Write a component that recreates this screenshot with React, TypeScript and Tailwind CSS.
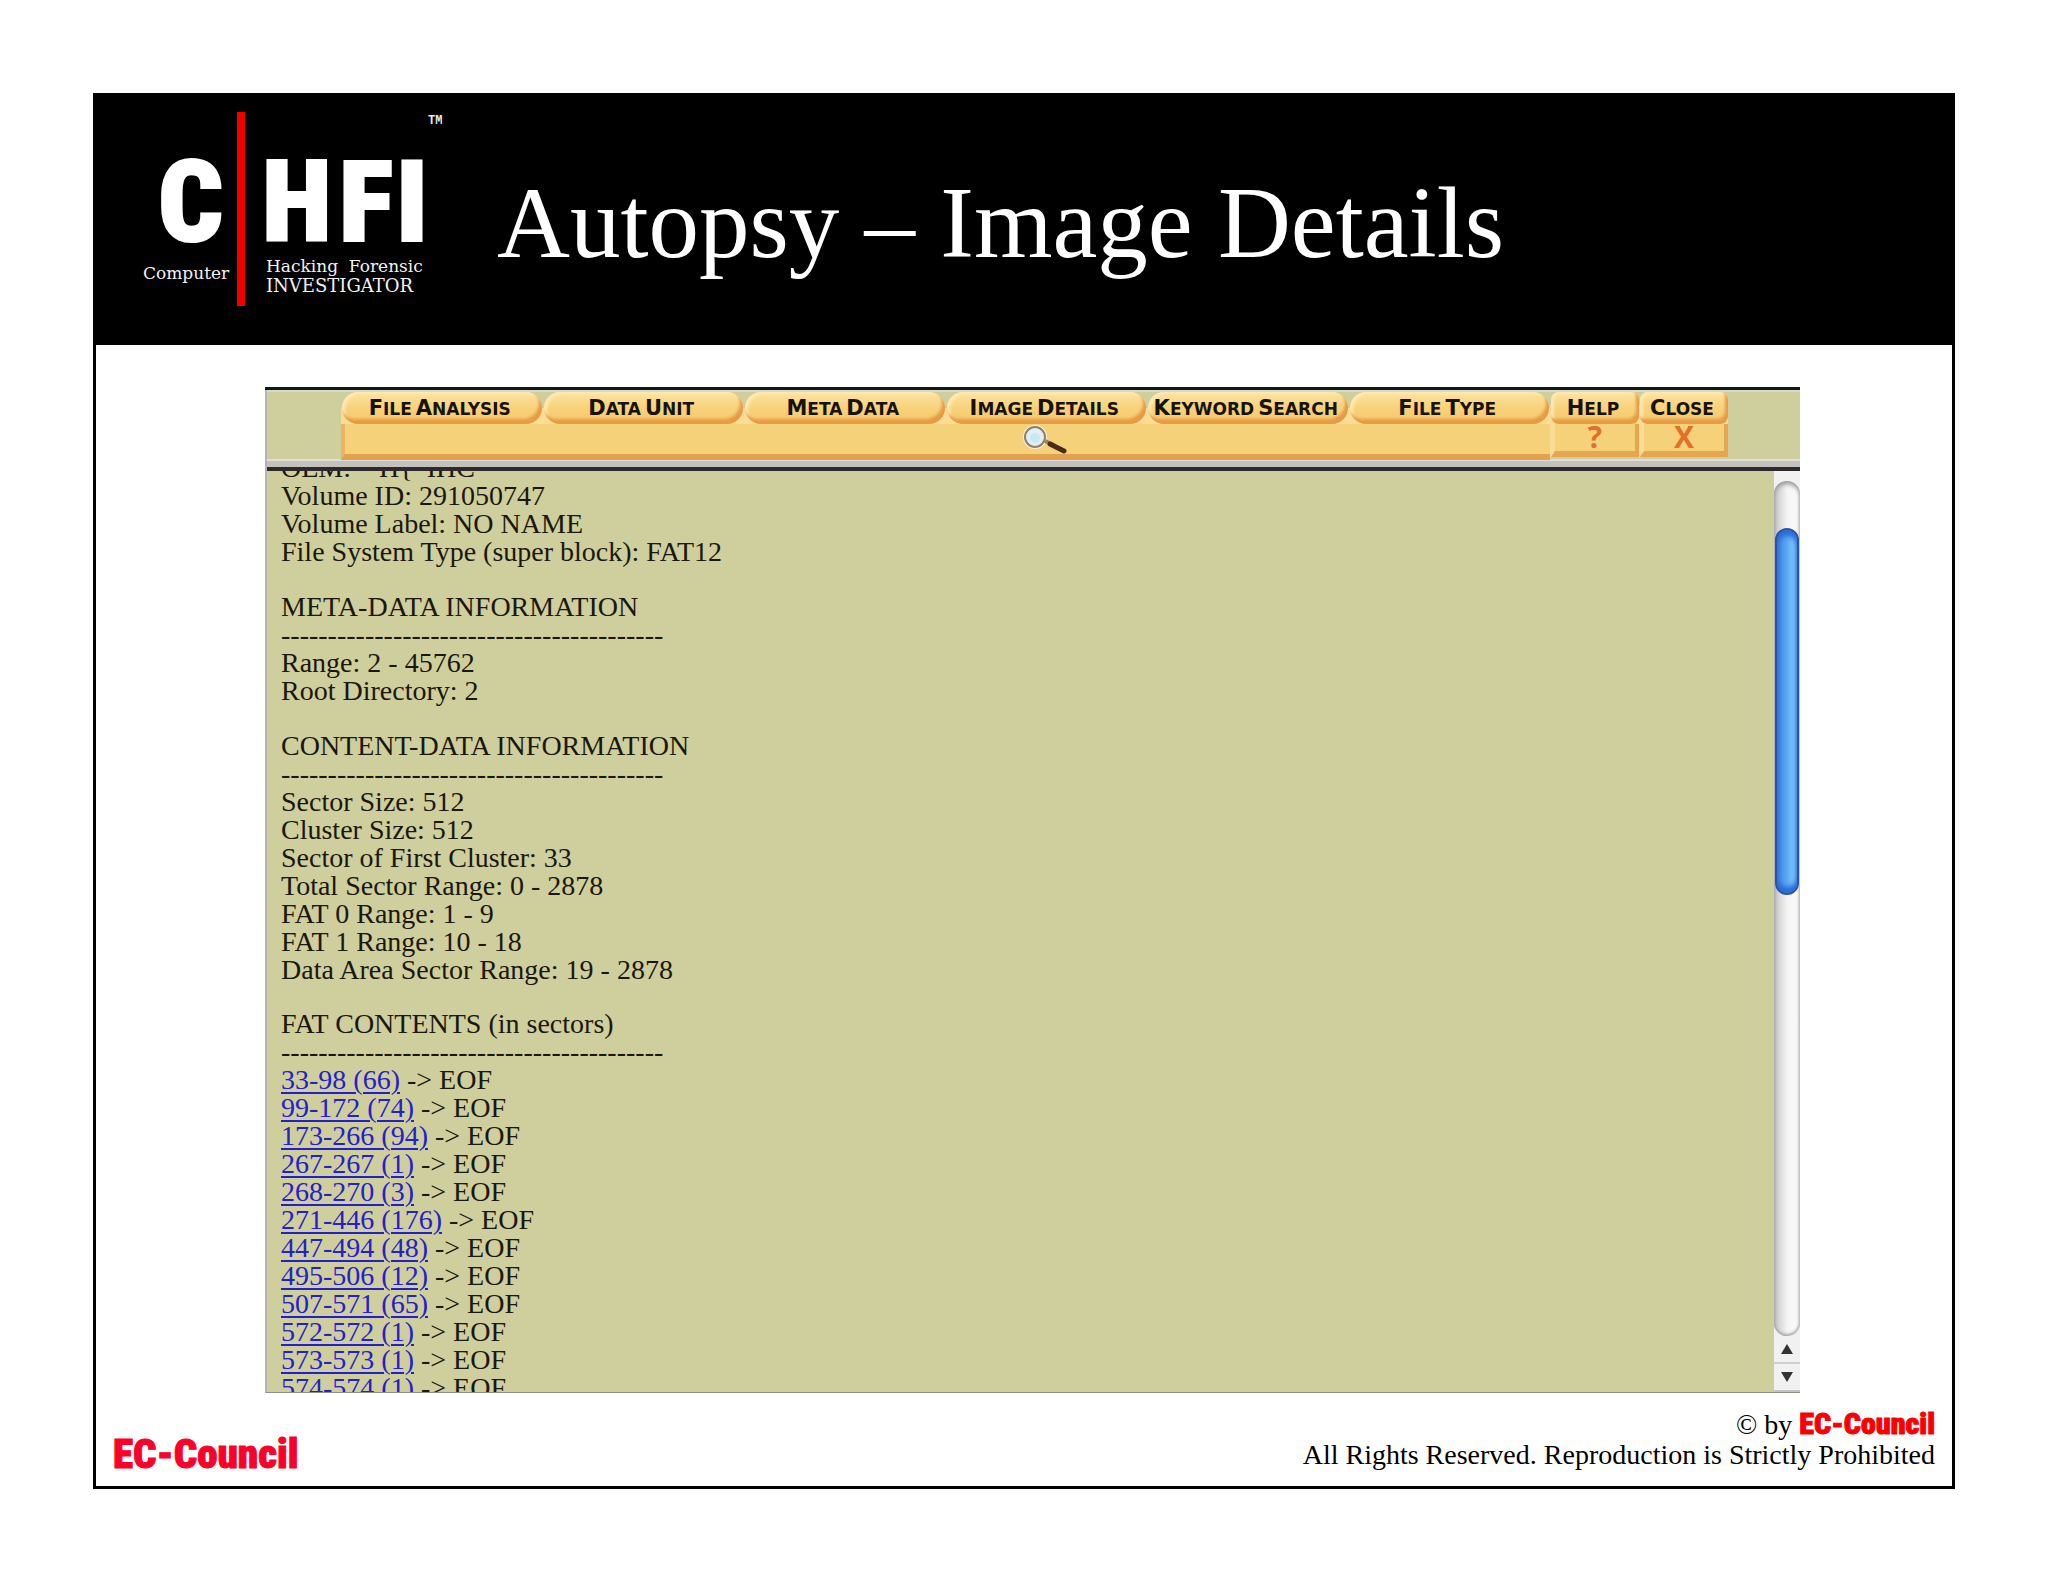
import clsx from "clsx";

const tabs = ["File Analysis", "Data Unit", "Meta Data", "Image Details", "Keyword Search", "File Type"];

const sections = [
  {
    title: "META-DATA INFORMATION",
    lines: ["Range: 2 - 45762", "Root Directory: 2"],
  },
  {
    title: "CONTENT-DATA INFORMATION",
    lines: [
      "Sector Size: 512",
      "Cluster Size: 512",
      "Sector of First Cluster: 33",
      "Total Sector Range: 0 - 2878",
      "FAT 0 Range: 1 - 9",
      "FAT 1 Range: 10 - 18",
      "Data Area Sector Range: 19 - 2878",
    ],
  },
];

const fatRuns = [
  "33-98 (66)",
  "99-172 (74)",
  "173-266 (94)",
  "267-267 (1)",
  "268-270 (3)",
  "271-446 (176)",
  "447-494 (48)",
  "495-506 (12)",
  "507-571 (65)",
  "572-572 (1)",
  "573-573 (1)",
  "574-574 (1)",
];

const RULE = "-".repeat(41);

function Logo() {
  return (
    <svg viewBox="0 0 320 210" className="h-[210px] w-[320px] shrink-0" role="img" aria-label="CHFI">
      <g
        fill="#fff"
        stroke="#fff"
        strokeWidth="2"
        className="font-['Roboto_Condensed',Roboto,sans-serif] text-[114px] font-black"
      >
        <text x="25" y="142">C</text>
        <text x="129" y="142">H</text>
        <text x="206" y="142">F</text>
        <text x="263" y="142">I</text>
      </g>
      <rect x="104" y="13" width="8" height="194" fill="#ee0000" />
      <g fill="#f2f2f2" className="font-['DejaVu_Serif',serif] text-[17px]">
        <text x="10" y="180">Computer</text>
        <text x="133" y="173" xmlSpace="preserve">Hacking  Forensic</text>
        <text x="133" y="193" className="text-[18px]">INVESTIGATOR</text>
      </g>
      <text x="295" y="25" fill="#e8e8e8" className="font-['Liberation_Mono',monospace] text-[12px] font-bold">
        TM
      </text>
    </svg>
  );
}

function Label({ text }: { text: string }) {
  return (
    <span className="flex justify-center gap-1 font-['DejaVu_Sans',sans-serif] text-[17px] leading-[24px] font-bold whitespace-nowrap text-[#17130a] uppercase">
      {text.split(" ").map((word) => (
        <span key={word} className="block first-letter:text-[21px]">
          {word}
        </span>
      ))}
    </span>
  );
}

function Tab({ text, small }: { text: string; small?: boolean }) {
  return (
    <button
      type="button"
      className={clsx(
        "block h-8 w-full bg-linear-to-b from-[#fde3a0] via-[#f8d27a] to-[#f3c76e] pt-1 pr-1 pb-1 shadow-[inset_-3px_-5px_3px_#e79b45,inset_3px_2px_3px_#fee9b4]",
        small ? "rounded-lg" : "rounded-2xl",
      )}
    >
      <Label text={text} />
    </button>
  );
}

function Magnifier() {
  return (
    <svg viewBox="0 0 44 30" className="h-[30px] w-[44px]" aria-hidden="true">
      <circle cx="12" cy="13" r="12" fill="#fff3cf" />
      <path d="M22 17 L31 21" stroke="#a97d58" strokeWidth="4" />
      <path d="M27 20 L41 27" stroke="#4a2a1a" strokeWidth="5" strokeLinecap="round" />
      <circle cx="12" cy="13" r="10" fill="#e2eef5" stroke="#8d8072" strokeWidth="2" />
      <circle cx="12" cy="14" r="5" fill="#c5ebf1" />
    </svg>
  );
}

function Toolbar() {
  return (
    <nav className="flex h-[69px] border-t-2 border-[#d9d9c8] bg-[#cfce9d] pr-[72px] pl-[74px]">
      <div className="flex h-[65px] min-w-0 flex-1 flex-col">
        <div className="flex bg-linear-to-b from-[#cfce9d] from-50% to-[#fbdc94] to-50%">
          {tabs.map((t) => (
            <div key={t} className="min-w-0 flex-1 px-px">
              <Tab text={t} />
            </div>
          ))}
        </div>
        <div className="flex flex-1 justify-center border-b-6 border-l-4 border-[#e5a04c] border-l-[#f0b461] bg-[#f5d279] pl-[195px]">
          <Magnifier />
        </div>
      </div>
      {[
        ["Help", "?"],
        ["Close", "X"],
      ].map(([name, mark]) => (
        <div key={name} className="flex h-[65px] w-[89px] flex-col bg-linear-to-b from-[#cfce9d] from-20% to-[#fbdc94] to-20% pl-px">
          <Tab text={name} small />
          <div className="flex-1 border-r-4 border-b-6 border-l-4 border-[#e8a550] border-l-[#fbdc94] bg-[#f5d279] text-center font-['Open_Sans',sans-serif] text-[30px] leading-[25px] font-bold text-[#e3702a]">
            {mark}
          </div>
        </div>
      ))}
    </nav>
  );
}

function Scrollbar() {
  return (
    <div className="flex w-[26px] shrink-0 flex-col bg-[#f1f1f1]">
      <div className="mt-2.5 flex-1 rounded-full bg-linear-to-r from-[#c4c4c4] via-[#f4f4f4] to-[#fdfdfd] pt-[47px] shadow-[inset_0_3px_4px_#999,inset_0_-2px_3px_#aaa]">
        <div className="mx-px h-[367px] rounded-full border-2 border-[#2a52a8] bg-linear-to-r from-[#3f86e0] via-[#5aa9f3] to-[#8fd4ff] shadow-[inset_0_6px_5px_#2a6cd8,inset_0_-6px_5px_#2a6cd8]" />
      </div>
      <button type="button" aria-label="Scroll up" className="flex h-7 items-center justify-center border-b-2 border-[#d0d0d0]">
        <svg viewBox="0 0 12 10" className="h-2.5 w-3">
          <path d="M6 0 L12 10 H0 Z" fill="#333" />
        </svg>
      </button>
      <button type="button" aria-label="Scroll down" className="flex h-7 items-center justify-center border-b-2 border-[#c4c4c4]">
        <svg viewBox="0 0 12 10" className="h-2.5 w-3">
          <path d="M6 10 L12 0 H0 Z" fill="#333" />
        </svg>
      </button>
    </div>
  );
}

function Report() {
  return (
    <div className="min-w-0 flex-1 overflow-hidden bg-[#cfce9d] pl-3.5">
      <div className="-mt-[17px] font-['Liberation_Serif',serif] text-[28px] leading-[28px] whitespace-pre text-[#1a180c]">
        <p>{"OEM:    H{  IHC"}</p>
        <p>Volume ID: 291050747</p>
        <p>Volume Label: NO NAME</p>
        <p>File System Type (super block): FAT12</p>
        {sections.map((s) => (
          <section key={s.title} className="mt-[27px]">
            <h2>{s.title}</h2>
            <p>{RULE}</p>
            {s.lines.map((line) => (
              <p key={line}>{line}</p>
            ))}
          </section>
        ))}
        <section className="mt-[26px]">
          <h2>FAT CONTENTS (in sectors)</h2>
          <p>{RULE}</p>
          {fatRuns.map((run) => (
            <p key={run}>
              <a href="#" className="text-[#2420cc] underline decoration-2 underline-offset-3">
                {run}
              </a>
              {" -> EOF"}
            </p>
          ))}
        </section>
      </div>
    </div>
  );
}

function Brand({ className }: { className: string }) {
  return (
    <span
      className={clsx(
        "font-['Roboto_Condensed',Roboto,sans-serif] font-black [-webkit-text-stroke:1px_currentColor]",
        className,
      )}
    >
      EC-Council
    </span>
  );
}

export default function App() {
  return (
    <div className="bg-white px-[93px] py-[93px]">
      <main className="border-3 border-black bg-white">
        <header className="flex h-[249px] items-start bg-black pt-[3px] pl-[37px]">
          <Logo />
          <h1 className="mt-[64px] ml-[44px] font-['Liberation_Serif',serif] text-[101px] leading-[120px] whitespace-nowrap text-white">
            Autopsy – Image Details
          </h1>
        </header>

        <div className="mt-[42px] mr-[152px] ml-[169px] border-t-3 border-[#10181c]">
          <div className="border-b border-l-2 border-[#8f8f80] border-l-[#b5b5b5]">
            <Toolbar />
            <div className="h-2 border-t-2 border-[#dedede] bg-[#c4c2bc]" />
            <div className="h-1 bg-[#2e2a2c]" />
            <div className="flex h-[921px]">
              <Report />
              <Scrollbar />
            </div>
          </div>
        </div>

        <footer className="flex h-[93px] items-center justify-between px-[17px]">
          <Brand className="pt-7 text-[41px] leading-[50px] text-[#fb0029]" />
          <div className="text-right font-['Liberation_Serif',serif] text-[28px] leading-[30px] text-black">
            <p>
              © by <Brand className="text-[30px] text-[#fb0000]" />
            </p>
            <p>All Rights Reserved. Reproduction is Strictly Prohibited</p>
          </div>
        </footer>
      </main>
    </div>
  );
}
